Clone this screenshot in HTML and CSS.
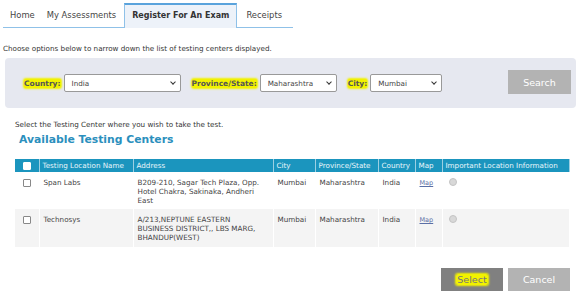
FILE: index.html
```html
<!DOCTYPE html>
<html lang="en">
<head>
    <meta charset="UTF-8">
    <title>Register For An Exam</title>
    <link rel="stylesheet" href="styles.css">
</head>
<body>
    <ul class="tabs">
        <li>Home</li>
        <li>My Assessments</li>
        <li class="active">Register For An Exam</li>
        <li>Receipts</li>
    </ul>

    <p class="intro">Choose options below to narrow down the list of testing centers displayed.</p>

    <div class="filters">
        <label class="mark">Country:</label>
        <div class="select country">India <span class="caret"></span></div>
        <label class="mark">Province/State:</label>
        <div class="select state">Maharashtra <span class="caret"></span></div>
        <label class="mark">City:</label>
        <div class="select city">Mumbai <span class="caret"></span></div>
        <button class="btn search">Search</button>
    </div>

    <p class="hint">Select the Testing Center where you wish to take the test.</p>
    <h2>Available Testing Centers</h2>

    <table class="centers">
        <colgroup>
            <col style="width: 24px">
            <col style="width: 94px">
            <col style="width: 140px">
            <col style="width: 42px">
            <col style="width: 63px">
            <col style="width: 37px">
            <col style="width: 27px">
            <col>
        </colgroup>
        <thead>
            <tr>
                <th class="chk"><span class="box white"></span></th>
                <th>Testing Location Name</th>
                <th>Address</th>
                <th>City</th>
                <th>Province/State</th>
                <th>Country</th>
                <th>Map</th>
                <th>Important Location Information</th>
            </tr>
        </thead>
        <tbody>
            <tr>
                <td class="chk"><span class="box"></span></td>
                <td>Span Labs</td>
                <td class="addr">B209-210, Sagar Tech Plaza, Opp. Hotel Chakra, Sakinaka, Andheri East</td>
                <td>Mumbai</td>
                <td>Maharashtra</td>
                <td>India</td>
                <td><a href="#">Map</a></td>
                <td><span class="dot"></span></td>
            </tr>
            <tr>
                <td class="chk"><span class="box"></span></td>
                <td>Technosys</td>
                <td class="addr">A/213,NEPTUNE EASTERN BUSINESS DISTRICT,, LBS MARG, BHANDUP(WEST)</td>
                <td>Mumbai</td>
                <td>Maharashtra</td>
                <td>India</td>
                <td><a href="#">Map</a></td>
                <td><span class="dot"></span></td>
            </tr>
        </tbody>
    </table>

    <div class="actions">
        <button class="btn select-btn"><span class="mark">Select</span></button>
        <button class="btn cancel">Cancel</button>
    </div>
</body>
</html>
```

FILE: styles.css
```css
body {
    font-family: 'DejaVu Sans', Verdana, sans-serif;
    font-size: 7.2px;
    color: #333;
    margin: 0;
    padding: 0;
    width: 581px;
    height: 295px;
    overflow: hidden;
}

.tabs {
    list-style: none;
    display: flex;
    margin: 3px 0 0 3px;
    padding: 0;
    width: 290px;
    border-bottom: 1px solid #8fc1e8;
    font-size: 8.4px;
    white-space: nowrap;
}

.tabs li {
    flex-shrink: 0;
    padding: 7px 5px 0 7px;
    height: 15px;
    color: #444;
}

.tabs li.active {
    background: #edf2f9;
    border: 1px solid #8fc1e8;
    border-top: 2px solid #5aa3dc;
    border-bottom: none;
    margin: 0 2px -1px 3px;
    padding: 6px 7px 0 7px;
    height: 17px;
    font-size: 8px;
    font-weight: bold;
    color: #333;
}

.intro {
    margin: 16px 0 0 3px;
}

.filters {
    display: flex;
    align-items: center;
    margin: 5px 5px 0 5px;
    height: 50px;
    background: #e6e8f0;
    border-radius: 4px;
    padding: 0 5px 0 19px;
}

.mark {
    background: #f2f200;
    box-shadow: 0 0 2px 1px #f2f200;
    border-radius: 2px;
    font-weight: bold;
    color: #555;
}

.filters label {
    font-size: 7.5px;
    margin-right: 3px;
}

.select {
    display: flex;
    align-items: center;
    justify-content: space-between;
    background: white;
    border: 1px solid #999;
    border-radius: 2px;
    height: 18px;
    padding: 0 5px 0 7px;
    margin-right: 11px;
    box-sizing: border-box;
    color: #444;
}

.select.country { width: 117px; }
.select.state { width: 77px; }
.select.city { width: 72px; }

.caret {
    width: 3px;
    height: 3px;
    border-right: 1px solid #333;
    border-bottom: 1px solid #333;
    transform: rotate(45deg);
    margin-top: -3px;
}

.btn {
    font-family: 'DejaVu Sans', Verdana, sans-serif;
    border: none;
    color: white;
    font-size: 9.5px;
    width: 63px;
    height: 24px;
    padding: 0;
    cursor: pointer;
}

.search {
    background: #b3b3b3;
    margin-left: auto;
    margin-top: -2px;
}

.hint {
    margin: 12px 0 0 15px;
}

h2 {
    color: #2b8fbd;
    font-size: 10.8px;
    margin: 4px 0 0 19px;
}

.centers {
    table-layout: fixed;
    border-collapse: collapse;
    margin: 13px 0 0 15px;
    width: 555px;
}

.centers th {
    background: #1b95be;
    color: #eaf6fb;
    font-weight: normal;
    text-align: left;
    height: 13px;
    padding: 0 2px 0 3px;
    border-right: 1px solid #9ccfe2;
    white-space: nowrap;
    overflow: hidden;
}

.centers td {
    vertical-align: top;
    padding: 6px 2px 0 4px;
    height: 31px;
    border-right: 1px solid #fff;
    color: #444;
}

.centers td.addr {
    padding-right: 9px;
}

.centers tbody tr:nth-child(2) td {
    background: #f4f4f4;
    height: 32px;
}

.centers .chk {
    text-align: center;
    padding-left: 2px;
}

.box {
    display: inline-block;
    width: 6px;
    height: 6px;
    border: 1px solid #888;
    border-radius: 1px;
    background: white;
}

th .box {
    border-color: white;
    margin-top: 2px;
}

td .box {
    margin-top: 1px;
}

.dot {
    display: inline-block;
    width: 6px;
    height: 6px;
    border-radius: 50%;
    background: #d8d8d8;
    border: 1px solid #c4c4c4;
    margin-left: 2px;
}

.centers a {
    color: #5b6fa6;
    font-size: 6.5px;
}

.actions {
    display: flex;
    justify-content: flex-end;
    gap: 5px;
    margin: 21px 11px 0 0;
}

.actions .btn {
    width: 62px;
    height: 23px;
}

.select-btn {
    background: #808080;
}

.select-btn .mark {
    font-weight: normal;
    color: #777;
    padding: 0 1px;
}

.cancel {
    background: #b3b3b3;
}
```
